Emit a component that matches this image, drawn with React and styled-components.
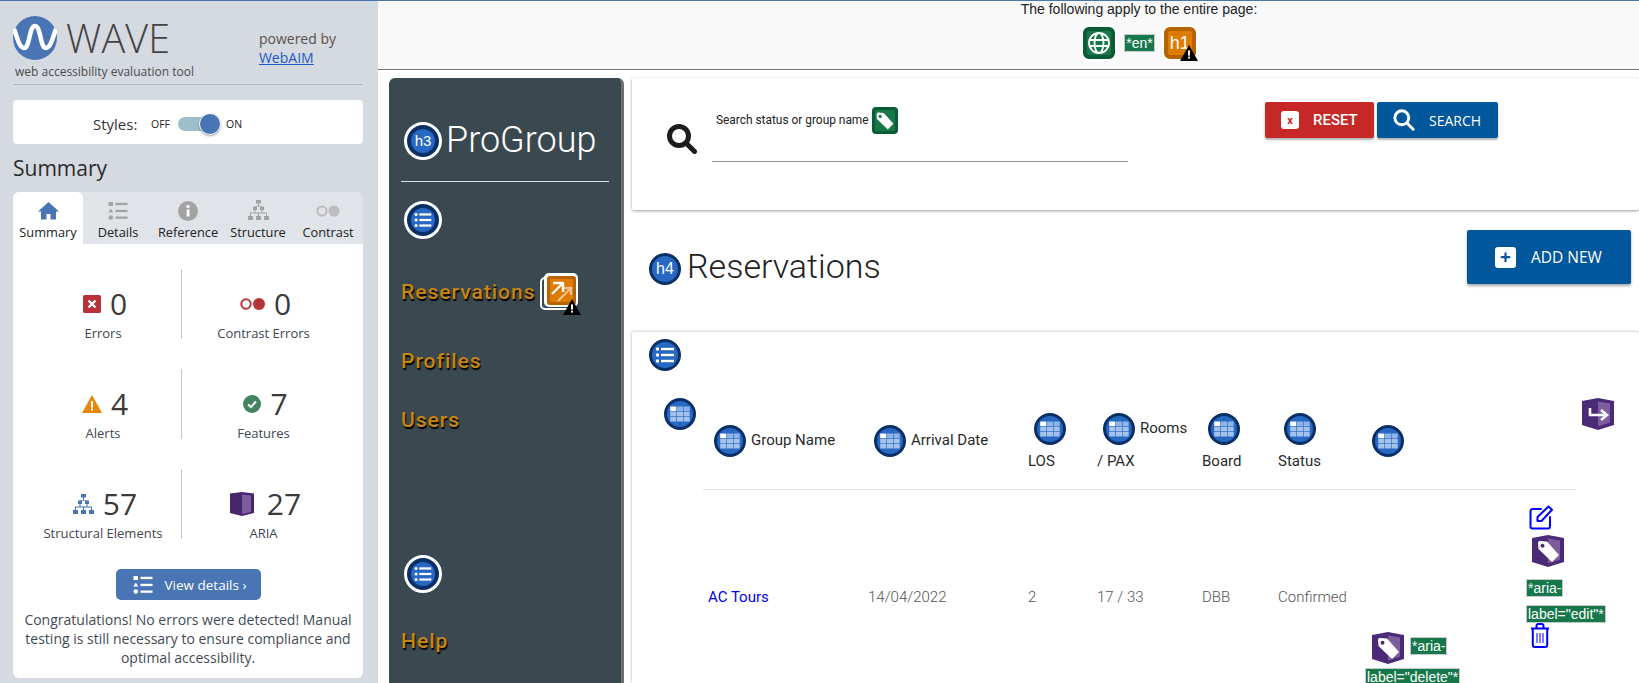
import React from "react";
import styled, { createGlobalStyle } from "styled-components";

const Global = createGlobalStyle`
  html, body { margin: 0; padding: 0; height: 683px; overflow: hidden; background: #fff; }
  * { box-sizing: border-box; }
  #root { height: 683px; }
  svg { display: block; flex: none; }
`;

const Page = styled.div`
  display: flex; height: 683px; width: 1639px; overflow: hidden;
  border-top: 1px solid #4a75b5; position: relative;
`;

/* ---------- WAVE panel ---------- */
const Panel = styled.aside`
  width: 378px; flex: none; background: #d5d9e0; padding: 0 15px 0 13px;
  font-family: "Open Sans", sans-serif; color: #333; display: flex; flex-direction: column;
`;
const Brand = styled.header`
  height: 84px; border-bottom: 1px solid #b4b8bd; display: flex; justify-content: space-between;
  padding-right: 27px; flex: none;
`;
const LogoBlock = styled.div`display: flex; flex-direction: column; padding-top: 15px;`;
const LogoRow = styled.div`display: flex; align-items: center; gap: 9px; height: 44px;`;
const LogoWord = styled.span`
  font-size: 39.5px; font-weight: 300; color: #444; line-height: 44px; letter-spacing: 0.2px; margin-top: -1px;
`;
const Tagline = styled.span`font-size: 12px; color: #4c4c4c; padding: 3px 0 0 2px; line-height: 18px;`;
const Powered = styled.div`font-size: 14px; color: #5c5047; line-height: 19px; padding-top: 28px;`;
const PoweredLink = styled.a`color: #1a5ac8; text-decoration: underline; display: block;`;
const StylesCard = styled.div`
  margin-top: 15px; height: 44px; background: #fff; border-radius: 4px; display: flex;
  align-items: center; padding: 3px 0 0 80px; flex: none;
`;
const StylesLabel = styled.span`font-size: 15px; color: #333; width: 58px;`;
const SwitchText = styled.span`font-size: 10.5px; color: #222;`;
const Track = styled.span`
  width: 42px; height: 14px; border-radius: 7px; background: #9cbfca; margin: 0 6px 0 8px;
  position: relative; display: block;
`;
const Knob = styled.span`
  position: absolute; right: -1px; top: -4px; width: 22px; height: 22px; border-radius: 50%;
  background: #4a75b5; border: 1px solid #fff; box-shadow: 0 1px 2px rgba(0,0,0,.35);
`;
const PanelTitle = styled.h2`
  margin: 8px 0 0; font-size: 21px; font-weight: 400; line-height: 32px; color: #2b2b2b; flex: none;
`;
const Tabs = styled.nav`
  margin-top: 8px; height: 52px; background: #e0e3e8; border-radius: 6px 6px 0 0; display: flex; flex: none;
`;
const Tab = styled.div`
  width: 70px; background: ${p => (p.$active ? "#fff" : "transparent")};
  border-radius: ${p => (p.$active ? "6px 6px 0 0" : "0")};
  display: flex; flex-direction: column; align-items: center; padding-top: 7px;
  font-size: 12.8px; color: #222; white-space: nowrap; line-height: 17px;
`;
const TabIcon = styled.span`height: 23px; display: flex; align-items: center; margin-bottom: 2px;`;
const SummaryBody = styled.div`
  height: 434px; background: #fff; border-radius: 0 0 6px 6px; padding-top: 25px; flex: none;
`;
const StatGrid = styled.div`
  display: grid; grid-template-columns: 169px 181px; grid-auto-rows: 70px; row-gap: 30px;
`;
const Stat = styled.div`
  display: flex; flex-direction: column; align-items: center; justify-content: flex-start;
  border-right: ${p => (p.$divider ? "1px solid #c4c6c9" : "none")};
  padding: ${p => (p.$divider ? "0 0 0 12px" : "0 18px 0 0")};
`;
const StatTop = styled.div`
  display: flex; align-items: center; gap: 9px; height: 46px; margin-top: 12px; padding-left: 4px;
  font-size: 30px; color: #3a3a3a; line-height: 46px;
`;
const StatLabel = styled.div`font-size: 13px; color: #404652; line-height: 18px; margin-top: -3px; white-space: nowrap;`;
const DetailsButton = styled.div`
  width: 145px; height: 31px; margin: 30px auto 0; background: #4a75b5; border-radius: 5px; color: #fff;
  font-size: 13.5px; display: flex; align-items: center; gap: 12px; padding-left: 17px;
`;
const Congrats = styled.p`
  margin: 10px 0 0; padding: 0 8px; text-align: center; font-size: 14px; line-height: 19px; color: #444a55;
`;

/* ---------- WAVE overlay icons ---------- */
const RoundBadge = styled.span`
  display: inline-flex; align-items: center; justify-content: center; flex: none;
  width: ${p => (p.$ring ? "38px" : "32px")}; height: ${p => (p.$ring ? "38px" : "32px")};
  border-radius: 50%; background: #2668c2; color: #fff;
  border: 3px solid #0a2f66;
  ${p => p.$ring && `outline: 3px solid #fff; outline-offset: -3px; border-width: 7px;`}
  font-family: "Liberation Sans", sans-serif; font-size: ${p => (p.$ring ? "15px" : "16px")}; line-height: 1;
  vertical-align: middle; margin: ${p => p.$m || "0"};
`;
const SquareBadge = styled.span`
  display: inline-flex; align-items: center; justify-content: center; flex: none; position: relative;
  width: ${p => (p.$small ? "26px" : "32px")}; height: ${p => (p.$small ? "27px" : "32px")};
  border-radius: ${p => (p.$small ? "4px" : "6px")}; color: #fff; vertical-align: middle;
  background: ${p => p.$inner}; border: ${p => (p.$small ? "3px" : "4px")} solid ${p => p.$edge};
  box-shadow: ${p => (p.$small ? "none" : "0 0 0 2px #fff")};
  font-family: "Liberation Sans", sans-serif; font-size: 18px;
`;
const TextTag = styled.span`
  background: #16784a; color: #fff; border: 1px solid #c9c9c9; font-family: "Liberation Sans", sans-serif;
  font-size: 14px; line-height: 16px; padding: 0 1px; -webkit-box-decoration-break: clone; box-decoration-break: clone;
`;
const TagBlock = styled.div`margin-left: -2px;`;
const WarnOverlay = styled.svg`
  position: absolute; right: ${p => p.$r}px; bottom: ${p => p.$b}px; width: 18px; height: 16px;
`;
const ShieldSvg = styled.svg`
  width: 32px; height: 32px; flex: none; vertical-align: middle; display: inline-block;
  margin: ${p => p.$m || "0"};
`;

const Warn = ({ r = -6, b = -6 }) => (
  <WarnOverlay viewBox="0 0 17 15" $r={r} $b={b}>
    <path d="M8.5 0 17 15H0z" fill="#000" />
    <rect x="7.6" y="5" width="1.8" height="5" fill="#fff" />
    <rect x="7.6" y="11" width="1.8" height="1.8" fill="#fff" />
  </WarnOverlay>
);

const TableGlyph = () => (
  <svg width="26" height="26" viewBox="0 0 26 26">
    {[0, 1, 2].flatMap(r =>
      [0, 1, 2].map(c => (
        <rect key={`${r}${c}`} x={3.2 + c * 6.7} y={5.5 + r * 5.2} width="6.1" height="4.6"
          fill={r === 0 && c === 0 ? "#fff" : r === 0 ? "#8fb3e6" : "#a4c2ec"} />
      ))
    )}
  </svg>
);
const ListGlyph = ({ size = 26 }) => (
  <svg width={size} height={size} viewBox="0 0 26 26">
    <circle cx="5.5" cy="7" r="1.7" fill="#fff" /><circle cx="5.5" cy="13" r="1.7" fill="#fff" /><circle cx="5.5" cy="19" r="1.7" fill="#fff" />
    <rect x="9" y="5.8" width="13" height="2.4" fill="#fff" /><rect x="9" y="11.8" width="13" height="2.4" fill="#fff" /><rect x="9" y="17.800" width="13" height="2.4" fill="#fff" />
  </svg>
);
const TableIcon = ({ m }) => <RoundBadge $m={m}><TableGlyph /></RoundBadge>;
const ListIcon = ({ ring, m }) => <RoundBadge $ring={ring} $m={m}><ListGlyph size={ring ? 24 : 26} /></RoundBadge>;

const TagGlyph = ({ dot = "#4b2a78" }) => (
  <g>
    <path d="M6 8Q6 6 8 6L15 6.500 27 20 20 27 6.500 14z" fill="#fff" />
    <circle cx="10.500" cy="10.800" r="2" fill={dot} />
  </g>
);
const Shield = ({ children, m }) => (
  <ShieldSvg viewBox="0 0 32 32" $m={m}>
    <path d="M0 3 16 0 32 3V27L16 32 0 27z" fill="#4b2a78" />
    <path d="M16 3.5 28 5.5V24.5L16 28.5z" fill="#7e5d9f" />
    {children}
  </ShieldSvg>
);

const GlobeIcon = () => (
  <svg width="24" height="24" viewBox="0 0 24 24" fill="none" stroke="#fff" strokeWidth="1.8">
    <circle cx="12" cy="12" r="10" />
    <ellipse cx="12" cy="12" rx="4.5" ry="10" />
    <path d="M2.5 9h19M2.5 15h19" />
  </svg>
);

const Magnifier = ({ size, color, sw = 4 }) => (
  <svg width={size} height={size} viewBox="0 0 30 30" fill="none" stroke={color} strokeWidth={sw} strokeLinecap="round">
    <circle cx="12" cy="12" r="9.500" />
    <path d="M20 20 27.500 27.500" />
  </svg>
);

/* ---------- app area ---------- */
const Main = styled.main`flex: 1; min-width: 0; display: flex; flex-direction: column; font-family: Roboto, sans-serif;`;
const TopStrip = styled.div`
  height: 69px; flex: none; background: #f9f9f9; border-bottom: 1px solid #757575; padding-left: 261px;
  display: flex; flex-direction: column; align-items: center; font-family: "Liberation Sans", sans-serif;
`;
const StripText = styled.div`font-size: 14px; line-height: 17px; color: #222;`;
const StripIcons = styled.div`display: flex; align-items: center; gap: 9px; margin-top: 9px; padding-left: 1px;`;

const Workspace = styled.div`flex: 1; min-height: 0; display: flex; padding: 8px 0 0 11px; gap: 8px;`;
const Sidebar = styled.nav`
  width: 235px; flex: none; background: #3a4850; border-radius: 6px 6px 0 0; border-right: 3px solid #707070;
  padding: 44px 12px 0 12px; display: flex; flex-direction: column;
`;
const SideBrand = styled.div`
  display: flex; align-items: center; gap: 4px; height: 60px; padding: 0 0 22px 3px;
  border-bottom: 1px solid #e0e0e0; flex: none; margin-bottom: 19px;
`;
const SideTitle = styled.span`font-size: 36px; font-weight: 300; color: #fff; line-height: 38px; margin-top: -2px;`;
const SideIconWrap = styled.div`padding-left: 3px; height: 38px; flex: none; margin-bottom: ${p => p.$mb}px;`;
const NavLink = styled.a`
  display: flex; align-items: center; height: 38px; font-size: 21px; font-weight: 500; letter-spacing: 1px;
  color: #c8850f; text-shadow: 1px 2px 1px #000; margin-bottom: ${p => p.$mb}px; flex: none;
`;
const ContextIcon = styled.span`
  position: relative; width: 38px; height: 38px; margin-left: 5px; display: block; letter-spacing: 0;
`;

const Content = styled.div`flex: 1; min-width: 0; display: flex; flex-direction: column;`;
const SearchCard = styled.section`
  height: 132px; flex: none; background: #fff; border-radius: 2px;
  box-shadow: 0 1px 3px rgba(0,0,0,.4); display: flex; align-items: flex-start; padding-left: 35px;
`;
const SearchIconWrap = styled.div`padding-top: 46px; width: 45px; flex: none;`;
const SearchField = styled.div`
  width: 416px; height: 84px; border-bottom: 1px solid #8e8e8e; padding: 29px 0 0 4px; flex: none;
  display: flex; align-items: flex-start; gap: 3px; font-size: 11.9px; color: #222; line-height: 26px; margin-right: 137px;
`;
const ActionButton = styled.button`
  height: 36px; border: 0; border-radius: 2px; margin: 24px 3px 0 0; color: #fff;
  background: ${p => p.$bg}; width: ${p => p.$w}px; display: flex; align-items: center; padding: 0 0 0 ${p => p.$pl}px;
  gap: ${p => p.$gap}px; font-family: ${p => p.$font}; font-size: ${p => p.$fs}px; font-weight: ${p => p.$fw || 400};
  box-shadow: 0 2px 2px rgba(0,0,0,.3);
`;
const WhiteKey = styled.span`
  width: ${p => p.$w}px; height: ${p => p.$h}px; background: #fff; border-radius: 3px; display: flex;
  align-items: center; justify-content: center; color: ${p => p.$c}; font-size: ${p => p.$fs}px; font-weight: 700; flex: none;
`;
const HeadingRow = styled.div`
  height: 122px; flex: none; display: flex; justify-content: space-between; padding: 20px 8px 0 17px;
`;
const HeadingLeft = styled.h1`
  margin: 23px 0 0; font-size: 34px; font-weight: 300; color: #222; display: flex; align-items: center; gap: 6px;
  height: 32px; line-height: 32px;
`;
const HeadingText = styled.span`margin-top: -6px;`;
const AddButton = styled.button`
  width: 164px; height: 54px; background: #01579b; color: #fff; border: 0; border-radius: 2px;
  display: flex; align-items: center; gap: 15px; padding-left: 28px; font-family: "Open Sans", sans-serif; font-size: 15.5px;
  box-shadow: 0 2px 3px rgba(0,0,0,.35);
`;
const TableCard = styled.section`
  flex: 1; min-height: 0; background: #fff; border-radius: 2px 2px 0 0; box-shadow: 0 0 3px rgba(0,0,0,.35);
  display: flex; flex-direction: column; padding: 7px 0 0 17px; overflow: hidden;
`;
const CardIconRow = styled.div`height: 32px; flex: none;`;
const TableRow = styled.div`display: flex; margin-top: 27px; align-items: flex-start; flex: none;`;
const Grid = styled.table`
  table-layout: fixed; width: 873px; border-collapse: collapse; margin: 14px 0 0 7px; flex: none;
  font-size: 15px; color: #222;
`;
const Th = styled.th`
  font-weight: 400; text-align: left; padding: ${p => p.$pt || 0}px 5px 0; height: 77px; line-height: 32px; vertical-align: top;
  border-bottom: 1px solid #e0e0e0; color: #2a2a2a; width: ${p => p.$w}px;
`;
const Td = styled.td`
  padding: 0 5px 2px; height: 218px; vertical-align: middle; color: #555; font-weight: 300;
`;
const ActionTd = styled.td`
  padding: ${p => p.$pt}px 5px 0; height: 218px; vertical-align: top; line-height: 26px;
`;
const LinkText = styled.a`color: #0000ff; font-weight: 400;`;
const NarrowBox = styled.div`width: 100px; line-height: 26px; margin-left: -6px;`;
const NarrowEnd = styled.div`width: 48px; line-height: 26px;`;
const BlockIcon = styled.div`line-height: 0; margin: ${p => p.$m || "0"};`;
const ArrowSlot = styled.div`margin-left: 6px;`;

const EditIcon = () => (
  <svg width="24" height="25" viewBox="0 0 24 25" fill="none" stroke="#0000ff" strokeWidth="2" strokeLinejoin="round" strokeLinecap="round">
    <path d="M12 4H3.5A2 2 0 0 0 1.5 6V21.5A2 2 0 0 0 3.5 23.500H19A2 2 0 0 0 21 21.500V12" />
    <path d="M19.500 1.500 23 4.800 12.500 16H8.500V12z" />
  </svg>
);
const TrashIcon = () => (
  <svg width="20" height="25" viewBox="0 0 20 25" fill="none" stroke="#0000ff" strokeWidth="2" strokeLinejoin="round">
    <path d="M1 5.500H19M6.500 5V3A2 2 0 0 1 8.500 1H11.500A2 2 0 0 1 13.500 3V5" />
    <path d="M2.800 6V22A2 2 0 0 0 4.800 24H15.200A2 2 0 0 0 17.200 22V6" />
    <path d="M7 10V20M10 10V20M13 10V20" strokeWidth="1" />
  </svg>
);

const StructureIcon = ({ color = "#4a75b5", w = 21 }) => (
  <svg width={w} height={w} viewBox="0 0 21 21" fill={color}>
    <rect x="8" y="0" width="5" height="3.500" /><rect x="5" y="6.500" width="4" height="3.500" /><rect x="12" y="6.500" width="4" height="3.500" />
    <rect x="0" y="16" width="5" height="4" /><rect x="8" y="16" width="5" height="4" /><rect x="16" y="16" width="5" height="4" />
    <path d="M10 3h1v3.500h3V7h-7v-.500h3zM2 12.500h17V16h-1v-2.500H11V16h-1v-2.500H3V16H2z" />
    <rect x="6.500" y="10" width="1" height="3" /><rect x="13.500" y="10" width="1" height="3" />
  </svg>
);
const DetailsGlyph = ({ color, w = 20 }) => (
  <svg width={w} height={w} viewBox="0 0 20 20">
    <rect x="0.500" y="1" width="4.500" height="4" fill={color} />
    <path d="M2.800 7.500 5.300 11.500H.3z" fill={color} />
    <circle cx="2.800" cy="16.500" r="2.300" fill={color} />
    <rect x="7.500" y="1.800" width="12" height="2.300" fill={color} />
    <rect x="7.500" y="8.800" width="12" height="2.300" fill={color} />
    <rect x="7.500" y="15.500" width="12" height="2.300" fill={color} />
  </svg>
);

const tabs = [
  ["Summary", true, <svg key="h" width="21" height="18" viewBox="0 0 21 18"><path d="M10.500 0 21 9.500H18V17.500H12.500V12H8.500V17.500H3V9.500H0z" fill="#4a75b5" /></svg>],
  ["Details", false, <DetailsGlyph key="d" color="#a3a3a3" />],
  ["Reference", false, <svg key="r" width="20" height="20" viewBox="0 0 20 20"><circle cx="10" cy="10" r="10" fill="#a3a3a3" /><rect x="8.700" y="8.500" width="2.800" height="7" fill="#fff" /><circle cx="10" cy="5.500" r="1.700" fill="#fff" /></svg>],
  ["Structure", false, <StructureIcon key="s" color="#a3a3a3" />],
  ["Contrast", false, <svg key="c" width="24" height="12" viewBox="0 0 24 12"><circle cx="6" cy="6" r="4.600" fill="none" stroke="#bcbcbc" strokeWidth="2" /><circle cx="18" cy="6" r="5.500" fill="#bcbcbc" /></svg>],
];

const stats = [
  [<svg key="e" width="18" height="18" viewBox="0 0 18 18"><rect width="18" height="18" rx="1.500" fill="#b93237" /><path d="M5.500 5.500 12.500 12.500M12.500 5.500 5.500 12.500" stroke="#fff" strokeWidth="2.400" /></svg>, "0", "Errors", true],
  [<svg key="c" width="25" height="12" viewBox="0 0 25 12"><circle cx="6" cy="6" r="4.700" fill="none" stroke="#b93237" strokeWidth="2" /><circle cx="19" cy="6" r="6" fill="#b93237" /></svg>, "0", "Contrast Errors", false],
  [<svg key="a" width="20" height="18" viewBox="0 0 20 18"><path d="M10 0 20 18H0z" fill="#e6870c" /><rect x="9" y="6" width="2" height="6.500" fill="#fff" /><rect x="9" y="13.500" width="2" height="2" fill="#fff" /></svg>, "4", "Alerts", true],
  [<svg key="f" width="18" height="18" viewBox="0 0 18 18"><circle cx="9" cy="9" r="9" fill="#41845f" /><path d="M5 9.500 8 12 13 6.500" stroke="#fff" strokeWidth="2" fill="none" /></svg>, "7", "Features", false],
  [<StructureIcon key="s" />, "57", "Structural Elements", true],
  [<svg key="ar" width="28" height="24" viewBox="0 0 28 24"><path d="M0 1.500 12 0 24 1.500V21L12 24 0 21z" fill="#47266f" /><path d="M12 2.500 21 3.500V20L12 22z" fill="#7e5d9f" /></svg>, "27", "ARIA", false],
];

export default function App() {
  return (
    <Page>
      <Global />
      <Panel>
        <Brand>
          <LogoBlock>
            <LogoRow>
              <svg width="44" height="44" viewBox="0 0 44 44">
                <circle cx="22" cy="22" r="22" fill="#4a75b5" />
                <path d="M1 13C4 20 6 32 11 32 17 32 16 10 22 10 28 10 27 32 33 32 38 32 40 20 43 13" fill="none" stroke="#fff" strokeWidth="4.500" />
              </svg>
              <LogoWord>WAVE</LogoWord>
            </LogoRow>
            <Tagline>web accessibility evaluation tool</Tagline>
          </LogoBlock>
          <Powered>
            powered by
            <PoweredLink>WebAIM</PoweredLink>
          </Powered>
        </Brand>
        <StylesCard>
          <StylesLabel>Styles:</StylesLabel>
          <SwitchText>OFF</SwitchText>
          <Track><Knob /></Track>
          <SwitchText>ON</SwitchText>
        </StylesCard>
        <PanelTitle>Summary</PanelTitle>
        <Tabs>
          {tabs.map(([label, active, icon]) => (
            <Tab key={label} $active={active}>
              <TabIcon>{icon}</TabIcon>
              {label}
            </Tab>
          ))}
        </Tabs>
        <SummaryBody>
          <StatGrid>
            {stats.map(([icon, n, label, div]) => (
              <Stat key={label} $divider={div}>
                <StatTop>{icon}<span>{n}</span></StatTop>
                <StatLabel>{label}</StatLabel>
              </Stat>
            ))}
          </StatGrid>
          <DetailsButton>
            <DetailsGlyph color="#fff" />
            View details ›
          </DetailsButton>
          <Congrats>Congratulations! No errors were detected! Manual testing is still necessary to ensure compliance and optimal accessibility.</Congrats>
        </SummaryBody>
      </Panel>

      <Main>
        <TopStrip>
          <StripText>The following apply to the entire page:</StripText>
          <StripIcons>
            <SquareBadge $inner="#19784a" $edge="#0a5c34"><GlobeIcon /></SquareBadge>
            <TextTag>*en*</TextTag>
            <SquareBadge $inner="#dd7c00" $edge="#b86200">h1<Warn /></SquareBadge>
          </StripIcons>
        </TopStrip>
        <Workspace>
          <Sidebar>
            <SideBrand>
              <RoundBadge $ring>h3</RoundBadge>
              <SideTitle>ProGroup</SideTitle>
            </SideBrand>
            <SideIconWrap $mb={34}><ListIcon ring /></SideIconWrap>
            <NavLink $mb={31}>
              Reservations
              <ContextIcon>
                <svg width="38" height="38" viewBox="0 0 38 38">
                  <rect x="1" y="5" width="31" height="31" rx="4" fill="#3a4850" stroke="#fff" strokeWidth="2" />
                  <rect x="4" y="0" width="34" height="34" rx="5" fill="#fff" />
                  <rect x="7" y="3" width="29" height="29" rx="3" fill="#b86200" />
                  <rect x="10" y="6" width="23" height="23" fill="#dd7c00" />
                  <path d="M13 10H23M23 9V19M12 21 22 11" stroke="#fff" strokeWidth="2.400" fill="none" />
                  <path d="M18 28 31 15M24 15H31V22" stroke="#f0bf8e" strokeWidth="2.400" fill="none" />
                </svg>
                <Warn r={-3} b={-4} />
              </ContextIcon>
            </NavLink>
            <NavLink $mb={21}>Profiles</NavLink>
            <NavLink $mb={116}>Users</NavLink>
            <SideIconWrap $mb={29}><ListIcon ring /></SideIconWrap>
            <NavLink>Help</NavLink>
          </Sidebar>
          <Content>
            <SearchCard>
              <SearchIconWrap><Magnifier size={30} color="#1c1c1c" sw={5} /></SearchIconWrap>
              <SearchField>
                Search status or group name
                <SquareBadge $small $inner="#19784a" $edge="#0a5c34">
                  <svg width="20" height="20" viewBox="4 4 25 25"><TagGlyph dot="#19784a" /></svg>
                </SquareBadge>
              </SearchField>
              <ActionButton $bg="#c62828" $w={109} $pl={16} $gap={14} $fw={500} $fs={15} $font="Roboto, sans-serif">
                <WhiteKey $w={18} $h={18} $c="#c62828" $fs={11}>x</WhiteKey>RESET
              </ActionButton>
              <ActionButton $bg="#01579b" $w={121} $pl={16} $gap={14} $fs={14} $font='"Open Sans", sans-serif'>
                <Magnifier size={22} color="#fff" sw={4} />SEARCH
              </ActionButton>
            </SearchCard>
            <HeadingRow>
              <HeadingLeft>
                <RoundBadge>h4</RoundBadge>
                <HeadingText>Reservations</HeadingText>
              </HeadingLeft>
              <AddButton>
                <WhiteKey $w={21} $h={21} $c="#01579b" $fs={19}>+</WhiteKey>ADD NEW
              </AddButton>
            </HeadingRow>
            <TableCard>
              <CardIconRow><ListIcon /></CardIconRow>
              <TableRow>
                <BlockIcon $m="0 0 0 15px"><TableIcon /></BlockIcon>
                <Grid>
                  <thead>
                    <tr>
                      <Th $w={160} $pt={12}><TableIcon m="0 5px 0 6px" />Group Name</Th>
                      <Th $w={160} $pt={12}><TableIcon m="0 5px 0 6px" />Arrival Date</Th>
                      <Th $w={69}><TableIcon m="0 0 0 6px" /><br />LOS</Th>
                      <Th $w={105}><TableIcon m="0 5px 0 6px" />Rooms<br />/ PAX</Th>
                      <Th $w={76}><TableIcon m="0 0 0 6px" /><br />Board</Th>
                      <Th $w={93}><TableIcon m="0 0 0 6px" /><br />Status</Th>
                      <Th $w={157} $pt={12}><TableIcon m="0 0 0 1px" /></Th>
                      <Th $w={53} />
                    </tr>
                  </thead>
                  <tbody>
                    <tr>
                      <Td><LinkText>AC Tours</LinkText></Td>
                      <Td>14/04/2022</Td>
                      <Td>2</Td>
                      <Td>17 / 33</Td>
                      <Td>DBB</Td>
                      <Td>Confirmed</Td>
                      <ActionTd $pt={142}>
                        <NarrowBox>
                          <Shield m="0 6px 0 7px"><TagGlyph /></Shield>
                          <TextTag>*aria-label="delete"*</TextTag>
                        </NarrowBox>
                      </ActionTd>
                      <ActionTd $pt={15}>
                        <NarrowEnd>
                          <BlockIcon $m="0 0 5px 1px"><EditIcon /></BlockIcon>
                          <BlockIcon $m="0 0 8px 4px"><Shield><TagGlyph /></Shield></BlockIcon>
                          <TagBlock><TextTag>*aria-label="edit"*</TextTag></TagBlock>
                          <BlockIcon $m="-4px 0 0 2px"><TrashIcon /></BlockIcon>
                        </NarrowEnd>
                      </ActionTd>
                    </tr>
                  </tbody>
                </Grid>
                <ArrowSlot>
                  <Shield><path d="M8 10V17H24M19 12 25 17 19 22" fill="none" stroke="#fff" strokeWidth="2.600" /></Shield>
                </ArrowSlot>
              </TableRow>
            </TableCard>
          </Content>
        </Workspace>
      </Main>
    </Page>
  );
}
